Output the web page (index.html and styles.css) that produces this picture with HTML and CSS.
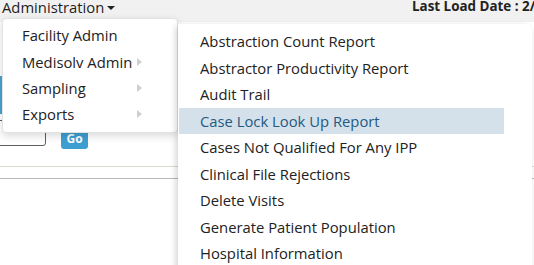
FILE: index.html
```html
<!DOCTYPE html>
<html>
<head>
<meta charset="utf-8">
<link rel="stylesheet" href="styles.css">
</head>
<body>
<header class="topbar">
  <div class="nav-title">Administration<span class="caret"></span></div>
  <div class="load-date">Last Load Date : 2/14/2019</div>
</header>
<main class="content">
  <div class="side-strip"></div>
  <div class="form-row">
    <div class="text-input"></div>
    <button class="go-btn">Go</button>
  </div>
  <div class="rule rule-light"></div>
  <div class="rule rule-dark"></div>
</main>

<ul class="menu">
  <li class="menu-item">Facility Admin</li>
  <li class="menu-item">Medisolv Admin<span class="arrow"></span></li>
  <li class="menu-item">Sampling<span class="arrow"></span></li>
  <li class="menu-item">Exports<span class="arrow"></span></li>
</ul>

<div class="submenu">
  <ul class="submenu-list">
    <li class="sub-item">Abstraction Count Report</li>
    <li class="sub-item">Abstractor Productivity Report</li>
    <li class="sub-item">Audit Trail</li>
    <li class="sub-item active">Case Lock Look Up Report</li>
    <li class="sub-item">Cases Not Qualified For Any IPP</li>
    <li class="sub-item">Clinical File Rejections</li>
    <li class="sub-item">Delete Visits</li>
    <li class="sub-item">Generate Patient Population</li>
    <li class="sub-item">Hospital Information</li>
  </ul>
</div>
</body>
</html>
```

FILE: styles.css
```css
html, body {
  margin: 0;
  padding: 0;
  width: 534px;
  height: 265px;
  overflow: hidden;
  background: #ffffff;
  font-family: "Open Sans", "Noto Sans", sans-serif;
  color: #222;
}

.topbar {
  height: 22px;
  background: #f1f1f1;
  display: flex;
  justify-content: space-between;
  align-items: flex-start;
  white-space: nowrap;
}

.nav-title {
  font-size: 14.8px;
  line-height: 16px;
  margin-top: -1px;
  padding-left: 2px;
  color: #1e1e1e;
  display: flex;
  align-items: center;
}

.caret {
  display: inline-block;
  width: 0;
  height: 0;
  margin-left: 3px;
  margin-top: 2px;
  border-left: 4px solid transparent;
  border-right: 4px solid transparent;
  border-top: 4px solid #222;
}

.load-date {
  font-size: 13.4px;
  font-weight: 700;
  line-height: 12px;
  width: 122px;
  overflow: hidden;
  color: #222;
}

.content {
  position: relative;
  height: 243px;
}

.side-strip {
  position: absolute;
  left: 0;
  top: 54px;
  width: 2px;
  height: 38px;
  background: #4aa3cf;
}

.form-row {
  display: flex;
  align-items: flex-end;
  gap: 15px;
  padding-top: 98px;
}

.text-input {
  margin-left: -6px;
  width: 52px;
  height: 26px;
  box-sizing: border-box;
  border: 1px solid #5e5e5e;
  border-radius: 3px;
  background: #fff;
}

.go-btn {
  width: 27px;
  height: 20px;
  margin-bottom: -3px;
  padding: 0;
  border: none;
  border-radius: 3px;
  background: #3d9fd1;
  color: #fff;
  font-family: "Open Sans", sans-serif;
  font-weight: 700;
  font-size: 12px;
  line-height: 20px;
}

.rule {
  height: 1px;
}

.rule-light {
  margin-top: 20px;
  background: #dcd8d1;
}

.rule-dark {
  margin-top: 11px;
  background: #b7b7b7;
}

.menu {
  position: absolute;
  left: 2px;
  top: 18px;
  width: 176px;
  height: 115px;
  box-sizing: border-box;
  margin: 0;
  padding: 3px 0;
  list-style: none;
  background: #fff;
  border: 1px solid #e2e2e2;
  border-radius: 4px;
  box-shadow: 0 3px 8px rgba(0, 0, 0, 0.15);
}

.menu-item {
  display: flex;
  align-items: center;
  height: 26.4px;
  padding-left: 19px;
  padding-right: 35px;
  font-size: 14.8px;
  color: #222;
}

.arrow {
  margin-left: auto;
  width: 0;
  height: 0;
  border-top: 4.5px solid transparent;
  border-bottom: 4.5px solid transparent;
  border-left: 5px solid #cfcfcf;
}

.submenu {
  position: absolute;
  left: 178px;
  top: 24px;
  width: 354px;
  height: 250px;
  background: #fff;
  border-radius: 0 5px 0 0;
  box-shadow: -2px 2px 6px rgba(0, 0, 0, 0.18);
}

.submenu-list {
  margin: 0;
  padding: 4px 0 0 1px;
  list-style: none;
  width: 325px;
}

.sub-item {
  height: 26.5px;
  line-height: 26.5px;
  padding-left: 21px;
  font-size: 14.8px;
  color: #222;
  white-space: nowrap;
}

.sub-item.active {
  background: #d4e1eb;
  color: #235a82;
}
```
